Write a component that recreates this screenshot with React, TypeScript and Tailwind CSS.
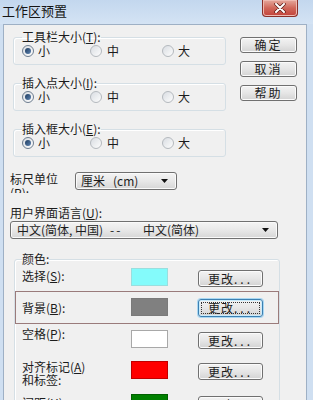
import type { ReactNode } from 'react';

function Key({ k }: { k: string }) {
  return <span className="underline underline-offset-[1px]">{k}</span>;
}

function Radio({ on }: { on?: boolean }) {
  return (
    <span
      className={`flex h-[12px] w-[12px] shrink-0 items-center justify-center rounded-full border ${
        on ? 'border-[#6d7d8f]' : 'border-[#b4b9be]'
      } bg-gradient-to-br from-[#d9dde2] to-[#fdfdfd]`}
    >
      {on && <span className="h-[6px] w-[6px] rounded-full bg-gradient-to-br from-[#1f3c60] to-[#5f86b3]" />}
    </span>
  );
}

function SizeGroup({ label, k, top }: { label: string; k: string; top?: boolean }) {
  return (
    <fieldset
      className={`${top ? '' : 'mt-[11px]'} w-[213px] rounded-[3px] border border-[#d5dfe5] pb-[6px] pl-[8px] shadow-[inset_1px_1px_0_#fff]`}
    >
      <legend className="px-0 text-[12px] leading-[14px]">
        {label}(<Key k={k} />):
      </legend>
      <div className="grid h-[14px] grid-cols-[68px_72px_60px] items-center leading-[14px]">
        <div className="flex items-center gap-[4px]">
          <Radio on />
          <span>小</span>
        </div>
        <div className="flex items-center gap-[5px]">
          <Radio />
          <span>中</span>
        </div>
        <div className="flex items-center gap-[4px]">
          <Radio />
          <span>大</span>
        </div>
      </div>
    </fieldset>
  );
}

function Btn({ children, focus, className }: { children: ReactNode; focus?: boolean; className?: string }) {
  return (
    <div
      className={`flex items-center justify-center rounded-[3px] border bg-gradient-to-b from-[#f3f3f3] via-[#e6e6e6] to-[#d3d3d3] text-[12px] leading-[14px] ${
        focus
          ? 'border-[#3c7fb1] shadow-[0_0_0_1px_#a9d7f2,inset_0_0_0_1px_#c9ebfb]'
          : 'border-[#707070] shadow-[inset_0_0_0_1px_#fbfbfb]'
      } ${className ?? ''}`}
    >
      {focus ? (
        <span className="flex h-[12px] w-[59px] items-center justify-center border border-dotted border-[#333]">
          {children}
        </span>
      ) : (
        children
      )}
    </div>
  );
}

function Change() {
  return (
    <span className="flex items-center">
      <span className="tracking-[1px]">更改</span>
      <span className="tracking-[3px]">...</span>
    </span>
  );
}

function Arrow() {
  return (
    <svg width="7" height="4" viewBox="0 0 7 4" className="shrink-0">
      <path d="M0 0H7L3.5 4Z" fill="#111" />
    </svg>
  );
}

function Combo({ children, className }: { children: ReactNode; className: string }) {
  return (
    <div
      className={`flex h-[18px] items-center rounded-[3px] border border-[#707070] bg-gradient-to-b from-[#f4f4f4] via-[#e8e8e8] to-[#d6d6d6] pr-[8px] shadow-[inset_0_0_0_1px_#fafafa] ${className}`}
    >
      <div className="flex flex-1 items-center whitespace-nowrap leading-[14px]">{children}</div>
      <Arrow />
    </div>
  );
}

function Swatch({ color }: { color: string }) {
  return <div className={`h-[18px] w-[37px] shrink-0 border ${color}`} />;
}

export default function App() {
  return (
    <div className="flex h-[400px] w-[313px] flex-col overflow-hidden bg-[#cfdff1] font-['Noto_Sans_CJK_SC','Noto_Sans',sans-serif] text-[12px] text-[#1c1c1c]">
      {/* title bar */}
      <div className="flex h-[24px] shrink-0 items-start bg-gradient-to-b from-[#c3d7ee] to-[#d4e3f4]">
        <div className="pl-[2px] pt-[3px] text-[13px] leading-[16px] text-[#151515]">工作区预置</div>
        <div className="ml-auto mr-[15px] flex h-[17px] w-[36px] items-center justify-center rounded-b-[4px] border border-t-0 border-[#8a2f28] bg-gradient-to-b from-[#e4a89d] via-[#d0675a] to-[#c2413a] shadow-[inset_0_0_0_1px_#eeb9b0]">
          <svg width="12" height="10" viewBox="0 0 12 10">
            <path d="M2 1L10 9M10 1L2 9" stroke="#5a1a15" strokeWidth="3.4" strokeLinecap="round" />
            <path d="M2 1L10 9M10 1L2 9" stroke="#fff" strokeWidth="2" strokeLinecap="round" />
          </svg>
        </div>
      </div>

      <div className="flex flex-1 pl-[3px] pr-[6px]">
        <div className="flex-1 border border-b-0 border-[#9eb0c5] bg-[#f0f0f0] pl-[6px] pt-[5px]">
          {/* sizes + buttons */}
          <div className="flex">
            <div className="ml-[3px] flex flex-col">
              <SizeGroup label="工具栏大小" k="T" top />
              <SizeGroup label="插入点大小" k="I" />
              <SizeGroup label="插入框大小" k="E" />
            </div>
            <div className="ml-[14px] flex flex-col gap-[8px] pt-[7px]">
              <Btn className="h-[16px] w-[57px] tracking-[2px]">确定</Btn>
              <Btn className="h-[16px] w-[57px] tracking-[2px]">取消</Btn>
              <Btn className="h-[16px] w-[57px] tracking-[2px]">帮助</Btn>
            </div>
          </div>

          {/* ruler unit */}
          <div className="mt-[15px] flex items-start">
            <div className="h-[21px] w-[65px] overflow-hidden leading-[14px]">
              <div>标尺单位</div>
              <div>
                (<Key k="R" />):
              </div>
            </div>
            <Combo className="w-[102px] pl-[5px]">
              <span>厘米</span>
              <span className="ml-[8px]">(cm)</span>
            </Combo>
          </div>

          {/* language */}
          <div className="mt-[13px] leading-[14px]">
            用户界面语言(<Key k="U" />):
          </div>
          <Combo className="mt-[1px] w-[268px] pl-[6px]">
            <span className="w-[93px] shrink-0">中文(简体, 中国)</span>
            <span className="w-[33px] shrink-0 tracking-[2px]">--</span>
            <span className="shrink-0">中文(简体)</span>
          </Combo>

          {/* colours */}
          <fieldset className="ml-[4px] mt-[13px] w-[264px] rounded-[3px] border border-[#d5dfe5] shadow-[inset_1px_1px_0_#fff]">
            <legend className="ml-[7px] px-0 leading-[14px]">颜色:</legend>

            <div className="flex h-[25px] items-start pl-[7px]">
              <div className="mt-[3px] w-[109px] leading-[14px]">
                选择(<Key k="S" />):
              </div>
              <Swatch color="mt-[2px] border-[#9adede] bg-[#84fbfb]" />
              <Btn className="ml-[30px] mt-[4px] h-[17px] w-[65px]">
                <Change />
              </Btn>
            </div>

            <div className="flex h-[33px] w-[264px] items-start border border-[#9a7b7b] pl-[6px]">
              <div className="mt-[9px] w-[109px] leading-[14px]">
                背景(<Key k="B" />):
              </div>
              <Swatch color="mt-[6px] border-[#7a7a7a] bg-[#808080]" />
              <Btn focus className="ml-[30px] mt-[7px] h-[18px] w-[65px]">
                <Change />
              </Btn>
            </div>

            <div className="flex h-[34px] items-start pl-[7px]">
              <div className="mt-[3px] w-[109px] leading-[14px]">
                空格(<Key k="P" />):
              </div>
              <Swatch color="mt-[6px] border-[#a8a8a8] bg-white" />
              <Btn className="ml-[30px] mt-[8px] h-[17px] w-[65px]">
                <Change />
              </Btn>
            </div>

            <div className="flex h-[33px] items-start pl-[7px]">
              <div className="mt-[2px] w-[109px] leading-[13px]">
                <div>
                  对齐标记(<Key k="A" />)
                </div>
                <div>和标签:</div>
              </div>
              <Swatch color="mt-[3px] border-[#c00000] bg-[#ff0000]" />
              <Btn className="ml-[30px] mt-[5px] h-[17px] w-[65px]">
                <Change />
              </Btn>
            </div>

            <div className="flex h-[30px] items-start pl-[7px]">
              <div className="mt-[5px] w-[109px] leading-[14px]">
                间距(<Key k="H" />):
              </div>
              <Swatch color="mt-[3px] border-[#006000] bg-[#008000]" />
              <Btn className="ml-[30px] mt-[5px] h-[17px] w-[65px]">
                <Change />
              </Btn>
            </div>
          </fieldset>
        </div>
      </div>
    </div>
  );
}
